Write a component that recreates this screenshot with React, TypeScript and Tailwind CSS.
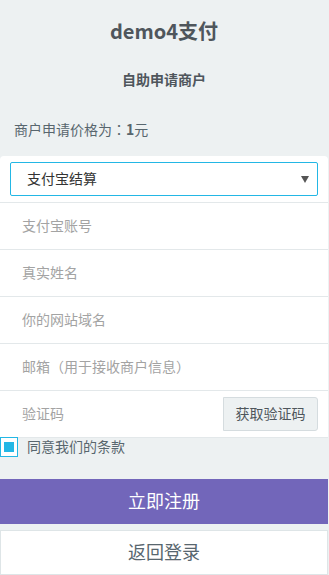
import React from "react";

const rows = ["支付宝账号", "真实姓名", "你的网站域名", "邮箱（用于接收商户信息）"];

export default function App() {
  return (
    <div
      className="min-h-[575px] bg-[#edf1f2] pr-px text-[#58666e]"
      style={{ fontFamily: '"Noto Sans CJK SC", "Noto Sans", sans-serif' }}
    >
      {/* Header */}
      <h1 className="pt-[17px] text-center text-[20px] font-bold leading-[28px] text-[#4f565c]">
        demo4支付
      </h1>
      <p className="mt-[24px] text-center text-[14px] font-bold leading-[20px] text-[#4f565c]">
        自助申请商户
      </p>
      <p className="mt-[30px] pl-[14px] text-[14px] leading-[20px]">
        商户申请价格为
        <span style={{ fontFamily: '"Noto Sans CJK JP", sans-serif' }}>：</span>
        <b>1</b>元
      </p>

      {/* Form card */}
      <div className="mt-[17px] rounded-t-[4px] border-b border-[#e3e8ea] bg-white">
        <div className="px-[10px] pt-[6px] pb-[6px]">
          <div className="flex h-[34px] items-center justify-between rounded-[2px] border border-[#23b7e5] pb-[2px] pl-[16px] pr-[8px] text-[14px] text-[#333]">
            <span>支付宝结算</span>
            <svg width="8" height="7" viewBox="0 0 8 7" className="mt-[2px]">
              <path d="M0 0h8L4 7z" fill="#555" />
            </svg>
          </div>
        </div>
        {rows.map((r) => (
          <div key={r} className="border-t border-[#e3e8ea]">
            <input
              placeholder={r}
              className="block h-[46px] w-full bg-transparent pb-[3px] pl-[22px] text-[14px] text-[#333] outline-none placeholder:text-[#a3a3a3]"
            />
          </div>
        ))}
        <div className="flex h-[47px] items-start border-t border-[#e3e8ea] pr-[10px]">
          <input
            placeholder="验证码"
            className="h-[46px] min-w-0 flex-1 bg-transparent pb-[3px] pl-[22px] text-[14px] text-[#333] outline-none placeholder:text-[#a3a3a3]"
          />
          <button className="mt-[6px] h-[34px] w-[95px] rounded-r-[3px] border border-[#d5dcdf] bg-[#edf1f2] pb-[2px] text-[14px] text-[#4f565c]">
            获取验证码
          </button>
        </div>
      </div>

      {/* Agreement */}
      <div className="-mt-[1px] flex h-[20px] items-center gap-[9px]">
        <div className="flex h-[20px] w-[18px] items-center justify-center border border-[#23b7e5] bg-white">
          <div className="h-[10px] w-[10px] bg-[#23b7e5]" />
        </div>
        <span className="-mt-[3px] text-[14px] leading-[20px]">同意我们的条款</span>
      </div>

      {/* Actions */}
      <button className="mt-[22px] block h-[45px] w-full bg-[#7266ba] pb-[2px] text-[18px] text-white">
        立即注册
      </button>
      <button className="mt-[6px] block h-[45px] w-full border border-[#dee5e7] bg-white pb-[2px] text-[18px] text-[#58666e]">
        返回登录
      </button>
    </div>
  );
}
